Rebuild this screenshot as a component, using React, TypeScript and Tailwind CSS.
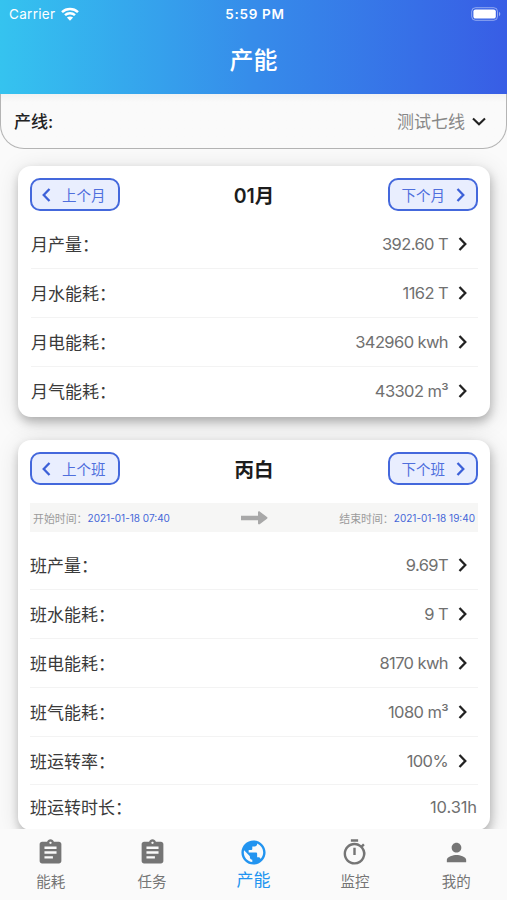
import type { ReactNode } from 'react';
import { MdAssignment, MdPerson, MdPublic, MdOutlineTimer } from 'react-icons/md';

const monthRows = [
  { label: '月产量：', value: '392.60 T' },
  { label: '月水能耗：', value: '1162 T' },
  { label: '月电能耗：', value: '342960 kwh' },
  { label: '月气能耗：', value: '43302 m³' },
];

const shiftRows = [
  { label: '班产量：', value: '9.69T' },
  { label: '班水能耗：', value: '9 T' },
  { label: '班电能耗：', value: '8170 kwh' },
  { label: '班气能耗：', value: '1080 m³' },
  { label: '班运转率：', value: '100%' },
];

const tabs = [
  { label: '能耗', icon: MdAssignment },
  { label: '任务', icon: MdAssignment },
  { label: '产能', icon: MdPublic, active: true },
  { label: '监控', icon: MdOutlineTimer },
  { label: '我的', icon: MdPerson },
];

function Chevron({ className, left }: { className?: string; left?: boolean }) {
  return (
    <svg viewBox="0 0 9 14" fill="none" stroke="currentColor" strokeWidth="2.3" className={className}>
      <path d={left ? 'M7.5 1 1.7 7l5.8 6' : 'M1.5 1l5.8 6-5.8 6'} />
    </svg>
  );
}

function StatusBar() {
  return (
    <div className="grid h-7 grid-cols-3 items-center pl-[9px] pr-[6px] text-[13.5px]">
      <div className="flex items-center gap-[6px] tracking-[0.3px]">
        Carrier
        <svg viewBox="0 0 18 14" className="h-[14px] w-[18px]" fill="none" stroke="currentColor" strokeWidth="2.5">
          <path d="M1 5.1C5.5.9 12.5.9 17 5.1" />
          <path d="M4 8.2c2.8-2.7 7.2-2.7 10 0" />
          <path d="M9 13.7 5.9 10.6c1.8-1.5 4.4-1.5 6.2 0z" fill="currentColor" stroke="none" />
        </svg>
      </div>
      <div className="text-center font-semibold tracking-[0.7px]">5:59 PM</div>
      <svg viewBox="0 0 30 14" className="h-[14px] w-[30px] justify-self-end">
        <rect x="0.7" y="0.7" width="25.8" height="12.6" rx="3.8" fill="none" stroke="white" strokeOpacity="0.45" />
        <rect x="2.4" y="2.4" width="22.4" height="9.2" rx="2.2" fill="white" />
        <path d="M28 4.8v4.4c1.8-.8 1.8-3.6 0-4.4z" fill="white" fillOpacity="0.5" />
      </svg>
    </div>
  );
}

function SwitchButton({ label, next }: { label: string; next?: boolean }) {
  return (
    <button
      className={`flex h-[33px] w-[90px] items-center gap-[11px] rounded-[10px] border-2 border-[#4468dc] bg-[#e9eefe] text-[14.5px] text-[#4f6fdd] ${
        next ? 'justify-end pr-[11px]' : 'pl-[10px]'
      }`}
    >
      {!next && <Chevron left className="h-[14px] w-[9px] text-[#3c60d8]" />}
      <span className="pt-[2px]">{label}</span>
      {next && <Chevron className="h-[14px] w-[9px] text-[#3c60d8]" />}
    </button>
  );
}

function CardHeader({ prev, title, next }: { prev: string; title: string; next: string }) {
  return (
    <div className="flex h-[33px] items-center justify-between">
      <SwitchButton label={prev} />
      <h2 className="pt-[4px] text-[19.5px] font-semibold text-[#1c1c1c]">{title}</h2>
      <SwitchButton label={next} next />
    </div>
  );
}

function RowLabel({ children }: { children: ReactNode }) {
  return (
    <span className="flex-1 font-['Noto_Sans_CJK_SC',sans-serif] leading-6 text-[#3a3a3a] [font-feature-settings:'halt']">
      {children}
    </span>
  );
}

function Row({ label, value }: { label: string; value: string }) {
  return (
    <div className="flex h-[48.9px] items-center border-b border-[#f3f3f3] last:border-b-0">
      <RowLabel>{label}</RowLabel>
      <span className="pt-px text-[16.5px] tracking-[-0.6px] text-[#707070]">{value}</span>
      <Chevron className="ml-[10px] mr-[11px] h-[14px] w-[9px] text-[#222]" />
    </div>
  );
}

function Card({ children, className }: { children: ReactNode; className: string }) {
  return (
    <section
      className={`ml-[18px] mr-[17px] rounded-[13px] bg-white px-3 pt-3 shadow-[1px_5px_10px_rgba(0,0,0,0.24),1px_4px_24px_rgba(0,0,0,0.13)] ${className}`}
    >
      {children}
    </section>
  );
}

function ShiftTime({ label, time }: { label: string; time: string }) {
  return (
    <span className="flex items-center gap-[5.6px]">
      <span className="font-['Noto_Sans_CJK_SC',sans-serif] text-[10.9px] leading-4 [font-feature-settings:'halt']">{label}</span>
      <span className="pt-px text-[10px] text-[#4567d8]">{time}</span>
    </span>
  );
}

export default function App() {
  return (
    <div
      lang="zh-CN"
      className="flex h-[900px] w-full flex-col overflow-hidden bg-[#fafafa] font-['Inter','Noto_Sans_CJK_SC',sans-serif]"
    >
      <header className="h-[94px] shrink-0 bg-linear-to-r from-[#35c3ef] via-[#368cea] to-[#385de5] text-white">
        <StatusBar />
        <h1 className="pt-[15px] text-center text-[24px] font-medium leading-[36px]">产能</h1>
      </header>

      <main className="flex-1 overflow-hidden">
        <div className="flex h-[55px] items-center justify-between rounded-b-[24px] border-x border-b border-[#b4b4b4] bg-linear-to-b from-[#f1f1f1] to-[#fafafa] to-15% pl-[13px] pr-[20px]">
          <span className="pt-[3px] text-[17px] font-medium text-[#222]">产线:</span>
          <span className="flex items-center gap-[7px] text-[17px] text-[#888]">
            <span className="pt-[3px]">测试七线</span>
            <svg viewBox="0 0 14 9" className="h-[9px] w-[14px]" fill="none" stroke="#222" strokeWidth="2.1">
              <path d="m1 1.5 6 5.8 6-5.8" />
            </svg>
          </span>
        </div>

        <Card className="mt-[17px] h-[251px]">
          <CardHeader prev="上个月" title="01月" next="下个月" />
          <div className="mt-[9px] pl-[1px] text-[17px]">
            {monthRows.map((row) => (
              <Row key={row.label} {...row} />
            ))}
          </div>
        </Card>

        <Card className="mt-[23px] h-[390px]">
          <CardHeader prev="上个班" title="丙白" next="下个班" />
          <div className="mt-[18px] flex h-[29px] items-center justify-between bg-[#f6f6f5] pl-[3px] pr-[3px] text-[#9b9b9b]">
            <ShiftTime label="开始时间：" time="2021-01-18 07:40" />
            <svg viewBox="0 0 27 14" className="h-[14px] w-[27px]" fill="#a8a8a8">
              <path d="M0 4.7h17V1.5c0-1 1-1.5 2-.8l7 5.3c.7.5.7 1.2 0 1.7l-7 5.3c-1 .8-2 .3-2-.8V9.3H0z" />
            </svg>
            <ShiftTime label="结束时间：" time="2021-01-18 19:40" />
          </div>
          <div className="mt-[9px] text-[17px]">
            {shiftRows.map((row) => (
              <Row key={row.label} {...row} />
            ))}
            <div className="flex h-[44px] items-center justify-between pr-px">
              <RowLabel>班运转时长：</RowLabel>
              <span className="text-[16.5px] tracking-[-0.1px] text-[#707070]">10.31h</span>
            </div>
          </div>
        </Card>
      </main>

      <nav className="relative grid h-[71px] shrink-0 grid-cols-5 bg-[#fafafa] pt-[9px]">
        {tabs.map(({ label, icon: Icon, active }) => (
          <div key={label} className={`flex flex-col items-center ${active ? 'text-[#2294f0]' : 'text-[#757575]'}`}>
            <Icon className="size-[29px]" />
            <span className={active ? 'pt-px text-[17px] leading-[25px]' : 'pt-[4px] text-[14.5px] leading-[22px]'}>{label}</span>
          </div>
        ))}
      </nav>
    </div>
  );
}
